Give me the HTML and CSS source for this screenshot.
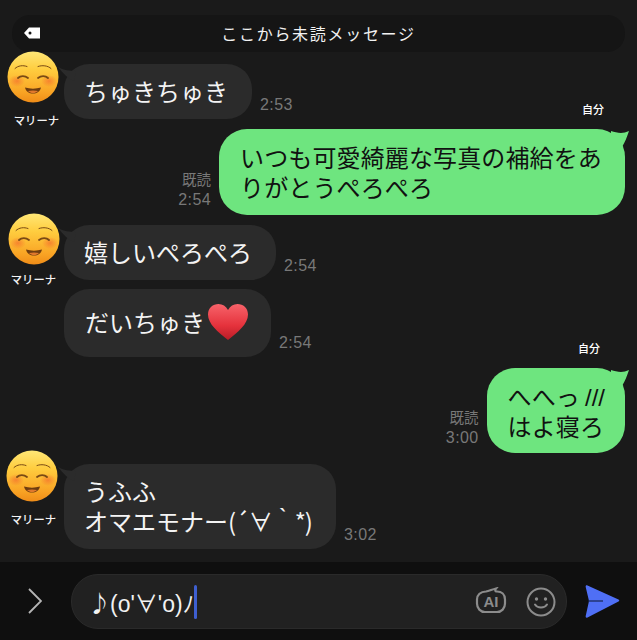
FILE: index.html
```html
<!DOCTYPE html>
<html lang="ja">
<head>
    <meta charset="UTF-8">
    <meta name="viewport" content="width=device-width, initial-scale=1.0">
    <title>トーク</title>
    <link rel="stylesheet" href="styles.css">
</head>
<body>
    <svg class="defs" width="0" height="0" aria-hidden="true">
        <defs>
            <linearGradient id="faceFill" x1="0" y1="0" x2="0" y2="1">
                <stop offset="0" stop-color="#ffe776"/>
                <stop offset=".35" stop-color="#ffcd3f"/>
                <stop offset=".8" stop-color="#f9a324"/>
                <stop offset="1" stop-color="#ef8c18"/>
            </linearGradient>
            <radialGradient id="blush">
                <stop offset="0" stop-color="#f2592c" stop-opacity=".55"/>
                <stop offset="1" stop-color="#f2592c" stop-opacity="0"/>
            </radialGradient>
            <linearGradient id="heartFill" x1="0" y1="0" x2="0" y2="1">
                <stop offset="0" stop-color="#f7636a"/>
                <stop offset=".6" stop-color="#e5323c"/>
                <stop offset="1" stop-color="#b91c26"/>
            </linearGradient>
            <symbol id="smiley" viewBox="0 0 52 52">
                <circle cx="26" cy="26" r="25.500" fill="url(#faceFill)"/>
                <ellipse cx="10" cy="30" rx="8" ry="6" fill="url(#blush)"/>
                <ellipse cx="42" cy="30" rx="8" ry="6" fill="url(#blush)"/>
                <g fill="none" stroke="#7a4a14" stroke-linecap="round">
                    <path d="M8 17.500c3-3 8-3.500 12-2" stroke-width="1"/>
                    <path d="M31 15.500c4-1.500 10-1 13 2" stroke-width="1"/>
                    <path d="M11 27c2.500-2.500 7-2.500 10 0" stroke-width="1.800"/>
                    <path d="M31 27c3-2.500 7.500-2.500 10 0" stroke-width="1.800"/>
                </g>
                <path d="M18 36.500c5 1.500 11 1.500 16 0-1 4-4 6-8 6s-7-2-8-6z" fill="#6e3d10"/>
                <path d="M21 40c3-.8 7-.8 10 0-1.500 1.600-3 2-5 2s-3.500-.4-5-2z" fill="#e0782c"/>
            </symbol>
        </defs>
    </svg>

    <main class="chat">
        <div class="unread">
            <svg class="unread-tag" width="16" height="12" viewBox="0 0 16 12"><path d="M0 6l5-5.500h11v11H5z" fill="#fff"/><circle cx="6" cy="6" r="1.500" fill="#151515"/></svg>
            <span>ここから未読メッセージ</span>
        </div>

        <div class="msg msg-in">
            <div class="who">
                <svg class="avatar"><use href="#smiley"/></svg>
                <div class="who-name">マリーナ</div>
            </div>
            <div class="bubble bubble-in has-tail">ちゅきちゅき</div>
            <div class="meta">2:53</div>
        </div>

        <div class="self-name self-first">自分</div>
        <div class="msg msg-out">
            <div class="meta"><span class="read">既読</span><br>2:54</div>
            <div class="bubble bubble-out">いつも可愛綺麗な写真の補給をあ<br>りがとうぺろぺろ</div>
        </div>

        <div class="msg msg-in gap-10">
            <div class="who who-b">
                <svg class="avatar"><use href="#smiley"/></svg>
                <div class="who-name">マリーナ</div>
            </div>
            <div class="bubble bubble-in has-tail">嬉しいぺろぺろ</div>
            <div class="meta">2:54</div>
        </div>

        <div class="msg msg-in gap-9">
            <div class="bubble bubble-in bubble-heart">だいちゅき<svg class="heart" width="40" height="36" viewBox="0 0 40 36"><path d="M20 36C10 28 0 20 0 10.500 0 4 5 0 10.500 0 14.500 0 18 2 20 6c2-4 5.500-6 9.500-6C35 0 40 4 40 10.500 40 20 30 28 20 36z" fill="url(#heartFill)"/></svg></div>
            <div class="meta">2:54</div>
        </div>

        <div class="self-name self-second">自分</div>
        <div class="msg msg-out">
            <div class="meta"><span class="read">既読</span><br>3:00</div>
            <div class="bubble bubble-out bubble-short">へへっ<span class="slashes">///</span><br>はよ寝ろ</div>
        </div>

        <div class="msg msg-in gap-11">
            <div class="who who-c">
                <svg class="avatar"><use href="#smiley"/></svg>
                <div class="who-name">マリーナ</div>
            </div>
            <div class="bubble bubble-in has-tail">うふふ<br>オマエモナー<span class="kaomoji">(´∀｀*)</span></div>
            <div class="meta">3:02</div>
        </div>
    </main>

    <footer class="composer">
        <svg class="chevron" width="14" height="26" viewBox="0 0 14 26"><path d="M1 1l12 12L1 25" fill="none" stroke="#b5b5b5" stroke-width="1.800"/></svg>
        <div class="field">
            <span class="field-text"><span class="note">♪</span>(o'∀'o)ﾉ</span><span class="caret"></span>
            <svg class="field-ai" width="32" height="30" viewBox="0 0 32 30">
                <path d="M11 4.500c3-.5 6-2 10-3-1 1.200-1 2.200 0 3h1c4.500 0 8 3 8 8v4c0 5-3.500 8.500-8 8.500H10c-4.500 0-8-3.500-8-8.500v-4c0-4.500 3.500-8 9-8z" fill="none" stroke="#8c8c8c" stroke-width="2.200"/>
                <text x="16" y="20" text-anchor="middle" class="ai-label">AI</text>
            </svg>
            <svg class="field-smile" width="30" height="30" viewBox="0 0 30 30">
                <circle cx="15" cy="15" r="13.500" fill="none" stroke="#8c8c8c" stroke-width="2"/>
                <circle cx="10.500" cy="12" r="1.700" fill="#8c8c8c"/>
                <circle cx="19.500" cy="12" r="1.700" fill="#8c8c8c"/>
                <path d="M9 17.500c2.500 4 9.500 4 12 0" fill="none" stroke="#8c8c8c" stroke-width="2" stroke-linecap="round"/>
            </svg>
        </div>
        <svg class="send" width="35" height="35" viewBox="0 0 35 35">
            <path d="M2.500 1.500L33.500 15.500c1 .7 1 1.500 0 2L2.500 33.500C1.200 34 .5 33.500.7 32L4 17 .7 3C.5 1.500 1.200 1 2.500 1.500z" fill="#4f6ff5"/>
            <path d="M3 17h15" stroke="#16244f" stroke-width="1.200"/>
        </svg>
    </footer>
</body>
</html>
```

FILE: styles.css
```css
* {
    box-sizing: border-box;
}
html, body {
    height: 640px;
    margin: 0;
    overflow: hidden;
}
body {
    display: flex;
    flex-direction: column;
    background-color: #1a1a1a;
    color: #fff;
    font-family: "Liberation Sans", "Noto Sans CJK JP", sans-serif;
}
.defs {
    position: absolute;
}
.chat {
    flex: 1;
    padding: 15px 12px 0 0;
}

/* 未読ライン */
.unread {
    position: relative;
    height: 37px;
    margin: 0 0 12px 12px;
    border-radius: 18px;
    background-color: #151515;
    font-family: "Noto Sans CJK JP", sans-serif;
    font-size: 16px;
    letter-spacing: 1.700px;
    line-height: 37px;
    text-align: center;
    color: #f2f2f2;
}
.unread-tag {
    position: absolute;
    left: 12px;
    top: 12px;
}

/* メッセージ */
.msg {
    display: flex;
    align-items: flex-end;
}
.msg-in {
    padding-left: 64px;
    position: relative;
}
.msg-out {
    justify-content: flex-end;
}
.gap-9 {
    margin-top: 9px;
}
.gap-10 {
    margin-top: 10px;
}
.gap-11 {
    margin-top: 11px;
}
.bubble {
    position: relative;
    padding: 12px 24px 13px 20px;
    border-radius: 25px;
    font-family: "Noto Sans CJK JP", sans-serif;
    font-size: 24px;
    line-height: 30px;
}
.bubble-in {
    background-color: #2b2b2b;
    color: #f4f4f4;
}
.bubble-out {
    padding: 13px 23px 13px 21px;
    border-radius: 28px;
    background-color: #6ee57f;
    color: #111;
    letter-spacing: .13px;
}
.bubble-short {
    padding-right: 20px;
    padding-bottom: 12px;
}
.bubble-out::after {
    content: "";
    position: absolute;
    right: -4px;
    top: 2px;
    width: 18px;
    height: 16px;
    background-color: #6ee57f;
    clip-path: path("M0 0 C6 2 12 3 18 0 C16 6 14 11 11 16 L0 16 Z");
}
.has-tail::before {
    content: "";
    position: absolute;
    left: -6px;
    top: 3px;
    width: 18px;
    height: 14px;
    background-color: #2b2b2b;
    clip-path: path("M0 0 C5 3 12 4 18 4 L16 14 C10 12 5 6 0 0 Z");
}
.bubble-heart {
    display: flex;
    align-items: center;
    padding: 15px 23px 17px 21px;
}
.heart {
    margin-left: 3px;
}
.slashes {
    margin-left: 5px;
    font-family: "Liberation Sans", sans-serif;
    letter-spacing: 0;
    line-height: 0;
}
.kaomoji {
    letter-spacing: -1px;
}

/* アイコンと名前 */
.who {
    position: absolute;
    left: 7px;
    top: -13px;
    width: 52px;
}
.who-b {
    left: 8px;
    top: -12px;
}
.who-c {
    left: 6px;
    top: -14px;
}
.avatar {
    display: block;
    width: 52px;
    height: 52px;
}
.who-name {
    margin-top: 10px;
    font-family: "Noto Sans CJK JP", sans-serif;
    font-size: 11.300px;
    font-weight: 500;
    line-height: 14px;
    text-align: right;
    white-space: nowrap;
    color: #f4f4f4;
}
.who-b .who-name {
    margin-right: 4px;
    margin-top: 7px;
}
.who-c .who-name {
    margin-right: 2px;
}

/* 時刻・既読 */
.meta {
    margin: 0 8px 5px;
    font-size: 16px;
    letter-spacing: .4px;
    line-height: 19px;
    text-align: right;
    color: #787878;
}
.msg-out .meta {
    margin: 0 8px 6px 0;
}
.read {
    font-size: 14.500px;
    letter-spacing: 0;
}

/* 自分 */
.self-name {
    height: 14px;
    font-family: "Noto Sans CJK JP", sans-serif;
    font-size: 11px;
    font-weight: 500;
    line-height: 14px;
    text-align: right;
}
.self-first {
    margin-top: -17px;
    margin-bottom: 13px;
    padding-right: 21px;
}
.self-second {
    margin-top: -16px;
    margin-bottom: 13px;
    padding-right: 25px;
}

/* 入力欄 */
.composer {
    display: flex;
    align-items: center;
    height: 78px;
    padding: 0 16px 0 28px;
    background-color: #0f0f0f;
}
.chevron {
    margin-right: 29px;
}
.field {
    display: flex;
    align-items: center;
    width: 496px;
    height: 55px;
    margin-top: 1px;
    padding: 0 10px 0 16px;
    border: 1px solid #2a2a2a;
    border-radius: 27px;
    background-color: #212121;
}
.field-text {
    font-family: "Liberation Sans", "Noto Sans CJK JP", sans-serif;
    font-size: 23px;
    color: #f2f2f2;
}
.note {
    font-family: "Noto Sans CJK JP", sans-serif;
    font-size: 23px;
    letter-spacing: -1px;
}
.caret {
    width: 3px;
    height: 34px;
    border-radius: 2px;
    background-color: #3e5fd0;
}
.field-ai {
    margin-left: auto;
    margin-right: 19px;
}
.ai-label {
    font-family: "Liberation Sans", sans-serif;
    font-size: 15px;
    font-weight: 700;
    fill: #8c8c8c;
}
.send {
    margin-left: 18px;
}
```
